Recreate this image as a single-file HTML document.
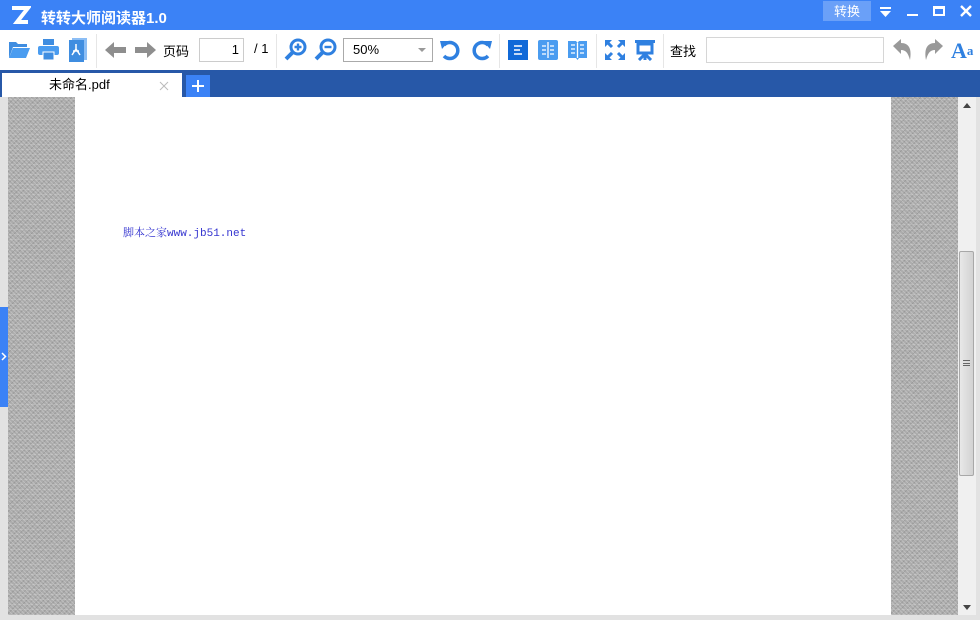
<!DOCTYPE html>
<html><head><meta charset="utf-8"><style>
*{margin:0;padding:0;box-sizing:border-box}
body{width:980px;height:620px;overflow:hidden;background:#e2e2e2;font-family:"Liberation Sans","Noto Sans CJK SC",sans-serif;position:relative}
.abs{position:absolute}
#title{left:0;top:0;width:980px;height:30px;background:#3b82f6}
#tb{left:0;top:30px;width:980px;height:40px;background:#fff}
#tabs{left:0;top:70px;width:980px;height:27px;background:#2758a8}
.tex{background-color:#acacac;background-image:repeating-linear-gradient(45deg,rgba(255,255,255,.22) 0 1px,transparent 1px 3px),repeating-linear-gradient(-45deg,rgba(0,0,0,.1) 0 1px,transparent 1px 4px),repeating-linear-gradient(0deg,rgba(255,255,255,.15) 0 1px,transparent 1px 5px)}
.sep{top:34px;width:1px;height:34px;background:#e6e6e6}
.t{font-size:13px;color:#000}
</style></head><body>
<div id="title" class="abs">
 <svg class="abs" style="left:9px;top:4px" width="22" height="22" viewBox="0 0 22 22"><path d="M3 4H19L8 18H19" stroke="#fff" stroke-width="4" fill="none"/><path d="M3 4H10" stroke="#fff" stroke-width="4"/></svg>
 <div class="abs" style="left:41px;top:7px;color:#fff;font-size:15px;font-weight:bold">转转大师阅读器1.0</div>
 <div class="abs" style="left:823px;top:1px;width:48px;height:20px;background:#6aa0f8;color:#fff;font-size:13px;text-align:center;line-height:22px">转换</div>
 <svg class="abs" style="left:879px;top:6px" width="14" height="12"><rect x="1" y="1" width="11" height="2" fill="#fff"/><path d="M1 5H12L6.5 11Z" fill="#fff"/></svg>
 <div class="abs" style="left:907px;top:14px;width:11px;height:2px;background:#fff"></div>
 <div class="abs" style="left:933px;top:6px;width:12px;height:10px;border:2px solid #fff;border-top-width:3px"></div>
 <svg class="abs" style="left:960px;top:5px" width="12" height="12"><path d="M1 1L11 11M11 1L1 11" stroke="#fff" stroke-width="2.4"/></svg>
</div>
<div id="tb" class="abs">
 <svg class="abs" style="left:8px;top:8px" width="22" height="22"><path d="M1 4H8L10 6H19V9H5L1 20Z" fill="#3f8de0"/><path d="M5 10H22L18 20H1Z" fill="#4a9cf0"/></svg>
 <svg class="abs" style="left:37px;top:8px" width="23" height="23"><rect x="6" y="1" width="11" height="6" fill="#3f8de0"/><rect x="1" y="8" width="21" height="9" rx="2" fill="#4a9cf0"/><rect x="6" y="14" width="11" height="8" fill="#3f8de0" stroke="#fff" stroke-width="1"/></svg>
 <svg class="abs" style="left:68px;top:7px" width="20" height="26"><rect x="4" y="1" width="15" height="22" fill="#8cbef5"/><rect x="1" y="3" width="15" height="22" fill="#3f8de0"/><path d="M8 7L8 12L4 18M8 12L12 18M5 14H11" stroke="#fff" stroke-width="1.5" fill="none"/></svg>
 <div class="abs sep" style="left:96px;top:4px"></div>
 <svg class="abs" style="left:105px;top:11px" width="22" height="18"><path d="M0 9L9 1V6H21V12H9V17Z" fill="#8e8e8e"/></svg>
 <svg class="abs" style="left:134px;top:11px" width="22" height="18"><path d="M22 9L13 1V6H1V12H13V17Z" fill="#8e8e8e"/></svg>
 <div class="abs t" style="left:163px;top:11px">页码</div>
 <div class="abs" style="left:199px;top:8px;width:45px;height:24px;border:1px solid #ccc;font-size:13px;text-align:right;padding-right:4px;line-height:22px">1</div>
 <div class="abs t" style="left:254px;top:11px">/ 1</div>
 <div class="abs sep" style="left:276px;top:4px"></div>
 <svg class="abs" style="left:284px;top:8px" width="24" height="24"><circle cx="14" cy="9" r="7" stroke="#2f80e0" stroke-width="3" fill="none"/><path d="M9 14L2 21" stroke="#2f80e0" stroke-width="4"/><path d="M10.5 9H17.5M14 5.5V12.5" stroke="#2f80e0" stroke-width="2.4"/></svg>
 <svg class="abs" style="left:314px;top:8px" width="24" height="24"><circle cx="14" cy="9" r="7" stroke="#2f80e0" stroke-width="3" fill="none"/><path d="M9 14L2 21" stroke="#2f80e0" stroke-width="4"/><path d="M10.5 9H17.5" stroke="#2f80e0" stroke-width="2.4"/></svg>
 <div class="abs" style="left:343px;top:8px;width:90px;height:24px;border:1px solid #aaa;font-size:13px;padding-left:9px;line-height:22px">50%</div>
 <svg class="abs" style="left:418px;top:18px" width="8" height="5"><path d="M0 0H8L4 4Z" fill="#999"/></svg>
 <svg class="abs" style="left:439px;top:8px" width="24" height="24"><path d="M5 7A8 8 0 1 1 5 18" stroke="#2f80e0" stroke-width="3.5" fill="none"/><path d="M1 3L10 3L3 11Z" fill="#2f80e0"/></svg>
 <svg class="abs" style="left:469px;top:8px" width="24" height="24"><path d="M19 7A8 8 0 1 0 19 18" stroke="#2f80e0" stroke-width="3.5" fill="none"/><path d="M23 3L14 3L21 11Z" fill="#2f80e0"/></svg>
 <div class="abs sep" style="left:499px;top:4px"></div>
 <svg class="abs" style="left:508px;top:10px" width="20" height="20"><rect width="20" height="20" fill="#1069d8"/><path d="M6 6H14M6 10H12M6 14H14" stroke="#fff" stroke-width="1.5"/></svg>
 <svg class="abs" style="left:538px;top:10px" width="20" height="20"><rect width="20" height="20" rx="2" fill="#4a9cf0"/><path d="M10 2V18M4 6H8M4 10H8M12 6H16M12 10H16M4 14H8M12 14H16" stroke="#fff" stroke-width="1.3"/></svg>
 <svg class="abs" style="left:567px;top:10px" width="21" height="20"><path d="M1 1H9L10.5 3L12 1H20V18H12L10.5 20L9 18H1Z" fill="#4a9cf0"/><path d="M10.5 3V18M4 5H8M4 9H8M4 13H8M13 5H17M13 9H17M13 13H17" stroke="#fff" stroke-width="1.3"/></svg>
 <div class="abs sep" style="left:596px;top:4px"></div>
 <svg class="abs" style="left:604px;top:9px" width="22" height="22"><path d="M2 2L8 8M20 2L14 8M2 20L8 14M20 20L14 14" stroke="#2f80e0" stroke-width="3"/><path d="M1 1H8L1 8ZM21 1H14L21 8ZM1 21H8L1 14ZM21 21H14L21 14Z" fill="#2f80e0"/></svg>
 <svg class="abs" style="left:634px;top:9px" width="22" height="22"><rect x="1" y="1" width="20" height="3" fill="#2f80e0"/><rect x="4" y="5" width="14" height="9" fill="none" stroke="#2f80e0" stroke-width="3"/><path d="M11 14V21M5 21L11 15L17 21" stroke="#2f80e0" stroke-width="3" fill="none"/></svg>
 <div class="abs sep" style="left:663px;top:4px"></div>
 <div class="abs t" style="left:670px;top:11px">查找</div>
 <div class="abs" style="left:706px;top:7px;width:178px;height:26px;border:1px solid #d6d6d6"></div>
 <svg class="abs" style="left:892px;top:9px" width="22" height="22"><path d="M1 7L9 0V4C17 4 20 10 18 21C16 14 14 11 9 11V15Z" fill="#999"/></svg>
 <svg class="abs" style="left:922px;top:9px" width="22" height="22"><path d="M21 7L13 0V4C5 4 2 10 4 21C6 14 8 11 13 11V15Z" fill="#999"/></svg>
 <div class="abs" style="left:951px;top:10px;font-family:'Liberation Serif',serif;font-weight:bold;color:#2f80e0;font-size:22px;line-height:22px">A<span style="font-size:13px;vertical-align:top">a</span></div>
</div>
<div id="tabs" class="abs">
 <div class="abs" style="left:2px;top:3px;width:180px;height:24px;background:#fff;font-size:13px;padding-left:47px;line-height:24px">未命名.pdf</div>
 <svg class="abs" style="left:159px;top:11px" width="10" height="10"><path d="M1 1L9 9M9 1L1 9" stroke="#bbb" stroke-width="1"/></svg>
 <div class="abs" style="left:186px;top:5px;width:24px;height:22px;background:#3b82f6"></div>
 <svg class="abs" style="left:191px;top:9px" width="14" height="14"><path d="M7 1V13M1 7H13" stroke="#fff" stroke-width="2"/></svg>
</div>
<div class="abs tex" style="left:8px;top:97px;width:67px;height:518px"></div>
<div class="abs" style="left:75px;top:97px;width:816px;height:518px;background:#fff"></div>
<div class="abs tex" style="left:891px;top:97px;width:67px;height:518px"></div>
<div class="abs" style="left:123px;top:224px;font-family:'Liberation Mono','Noto Serif CJK SC',monospace;font-size:11px;color:#3535d0;white-space:nowrap">脚本之家www.jb51.net</div>
<div class="abs" style="left:0;top:307px;width:8px;height:100px;background:#3b82f6"></div>
<svg class="abs" style="left:1px;top:352px" width="6" height="9"><path d="M1 1L4.5 4.5L1 8" stroke="#fff" stroke-width="1.5" fill="none"/></svg>
<div class="abs" style="left:958px;top:97px;width:18px;height:518px;background:#f0f0f0"></div>
<svg class="abs" style="left:963px;top:103px" width="8" height="5"><path d="M0 5H8L4 0Z" fill="#444"/></svg>
<svg class="abs" style="left:963px;top:605px" width="8" height="5"><path d="M0 0H8L4 5Z" fill="#444"/></svg>
<div class="abs" style="left:959px;top:251px;width:15px;height:225px;background:linear-gradient(90deg,#e8e8e8,#d2d2d2);border:1px solid #a8a8a8;border-radius:2px"></div>
<div class="abs" style="left:963px;top:360px;width:7px;height:6px;border-top:1px solid #666;border-bottom:1px solid #666"></div>
<div class="abs" style="left:963px;top:363px;width:7px;height:1px;background:#666"></div>
</body></html>
